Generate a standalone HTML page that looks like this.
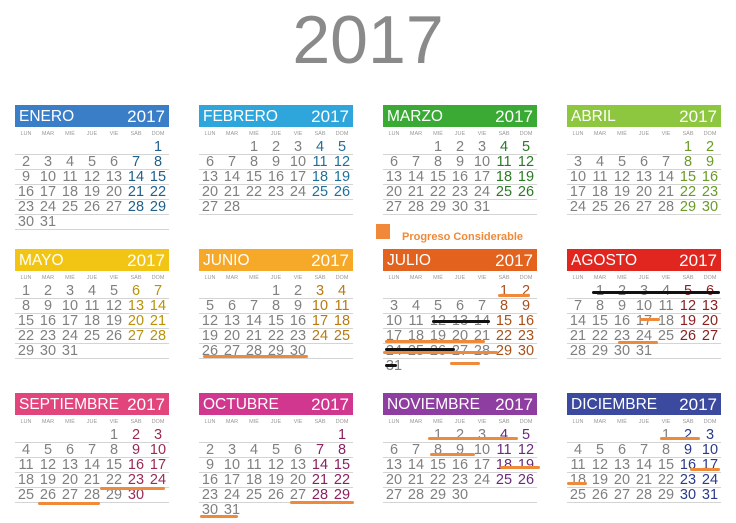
<!DOCTYPE html><html><head><meta charset="utf-8"><style>
body{margin:0;width:736px;height:523px;background:#fff;position:relative;overflow:hidden;font-family:"Liberation Sans",sans-serif}
.t{position:absolute;left:0;width:736px;top:2px;text-align:center;font-size:68px;color:#8a8a8a;line-height:76px}
.m{position:absolute;width:154px}
.h{height:22px;color:#fff;font-size:15.5px;line-height:23px;display:flex;justify-content:space-between;padding:0 4px}
.h b{font-weight:normal;font-size:17px}
.l{display:flex;height:12px;font-size:5.5px;color:#999;line-height:12px;margin-top:1px}
.l i,.r i{font-style:normal;width:22px;text-align:center}
.r{display:flex;height:14px;border-bottom:1px solid #d4d4d4;font-size:14.5px;line-height:15px;color:#808080}
.r i:nth-child(6),.r i:nth-child(7){color:var(--c)}
.o{position:absolute;height:3px;background:#ee8a3a;border-radius:2px}
.k{position:absolute;height:3px;background:#111;border-radius:2px}
</style></head><body>
<div class="t">2017</div>

<div class="m" style="left:15px;top:105px;--c:#1f5f8a"><div class="h" style="background:#3a7ec8">ENERO<b>2017</b></div><div class="l"><i>LUN</i><i>MAR</i><i>MIÉ</i><i>JUE</i><i>VIE</i><i>SÁB</i><i>DOM</i></div>
<div class="r"><i></i><i></i><i></i><i></i><i></i><i></i><i>1</i></div><div class="r"><i>2</i><i>3</i><i>4</i><i>5</i><i>6</i><i>7</i><i>8</i></div><div class="r"><i>9</i><i>10</i><i>11</i><i>12</i><i>13</i><i>14</i><i>15</i></div><div class="r"><i>16</i><i>17</i><i>18</i><i>19</i><i>20</i><i>21</i><i>22</i></div><div class="r"><i>23</i><i>24</i><i>25</i><i>26</i><i>27</i><i>28</i><i>29</i></div><div class="r"><i>30</i><i>31</i><i></i><i></i><i></i><i></i><i></i></div></div>

<div class="m" style="left:199px;top:105px;--c:#1f6f9a"><div class="h" style="background:#2ea6dc">FEBRERO<b>2017</b></div><div class="l"><i>LUN</i><i>MAR</i><i>MIÉ</i><i>JUE</i><i>VIE</i><i>SÁB</i><i>DOM</i></div>
<div class="r"><i></i><i></i><i>1</i><i>2</i><i>3</i><i>4</i><i>5</i></div><div class="r"><i>6</i><i>7</i><i>8</i><i>9</i><i>10</i><i>11</i><i>12</i></div><div class="r"><i>13</i><i>14</i><i>15</i><i>16</i><i>17</i><i>18</i><i>19</i></div><div class="r"><i>20</i><i>21</i><i>22</i><i>23</i><i>24</i><i>25</i><i>26</i></div><div class="r"><i>27</i><i>28</i><i></i><i></i><i></i><i></i><i></i></div></div>

<div class="m" style="left:383px;top:105px;--c:#2a7a25"><div class="h" style="background:#3aaa35">MARZO<b>2017</b></div><div class="l"><i>LUN</i><i>MAR</i><i>MIÉ</i><i>JUE</i><i>VIE</i><i>SÁB</i><i>DOM</i></div>
<div class="r"><i></i><i></i><i>1</i><i>2</i><i>3</i><i>4</i><i>5</i></div><div class="r"><i>6</i><i>7</i><i>8</i><i>9</i><i>10</i><i>11</i><i>12</i></div><div class="r"><i>13</i><i>14</i><i>15</i><i>16</i><i>17</i><i>18</i><i>19</i></div><div class="r"><i>20</i><i>21</i><i>22</i><i>23</i><i>24</i><i>25</i><i>26</i></div><div class="r"><i>27</i><i>28</i><i>29</i><i>30</i><i>31</i><i></i><i></i></div></div>

<div class="m" style="left:567px;top:105px;--c:#6a9a28"><div class="h" style="background:#8dc63f">ABRIL<b>2017</b></div><div class="l"><i>LUN</i><i>MAR</i><i>MIÉ</i><i>JUE</i><i>VIE</i><i>SÁB</i><i>DOM</i></div>
<div class="r"><i></i><i></i><i></i><i></i><i></i><i>1</i><i>2</i></div><div class="r"><i>3</i><i>4</i><i>5</i><i>6</i><i>7</i><i>8</i><i>9</i></div><div class="r"><i>10</i><i>11</i><i>12</i><i>13</i><i>14</i><i>15</i><i>16</i></div><div class="r"><i>17</i><i>18</i><i>19</i><i>20</i><i>21</i><i>22</i><i>23</i></div><div class="r"><i>24</i><i>25</i><i>26</i><i>27</i><i>28</i><i>29</i><i>30</i></div></div>

<div style="position:absolute;left:376px;top:224px;width:14px;height:15px;background:#f08a3a"></div>
<div style="position:absolute;left:402px;top:231px;font-size:11px;font-weight:bold;color:#ee8a3a">Progreso Considerable</div>

<div class="m" style="left:15px;top:249px;--c:#b8920a"><div class="h" style="background:#f2c514">MAYO<b>2017</b></div><div class="l"><i>LUN</i><i>MAR</i><i>MIÉ</i><i>JUE</i><i>VIE</i><i>SÁB</i><i>DOM</i></div>
<div class="r"><i>1</i><i>2</i><i>3</i><i>4</i><i>5</i><i>6</i><i>7</i></div><div class="r"><i>8</i><i>9</i><i>10</i><i>11</i><i>12</i><i>13</i><i>14</i></div><div class="r"><i>15</i><i>16</i><i>17</i><i>18</i><i>19</i><i>20</i><i>21</i></div><div class="r"><i>22</i><i>23</i><i>24</i><i>25</i><i>26</i><i>27</i><i>28</i></div><div class="r"><i>29</i><i>30</i><i>31</i><i></i><i></i><i></i><i></i></div></div>

<div class="m" style="left:199px;top:249px;--c:#b87a10"><div class="h" style="background:#f6a828">JUNIO<b>2017</b></div><div class="l"><i>LUN</i><i>MAR</i><i>MIÉ</i><i>JUE</i><i>VIE</i><i>SÁB</i><i>DOM</i></div>
<div class="r"><i></i><i></i><i></i><i>1</i><i>2</i><i>3</i><i>4</i></div><div class="r"><i>5</i><i>6</i><i>7</i><i>8</i><i>9</i><i>10</i><i>11</i></div><div class="r"><i>12</i><i>13</i><i>14</i><i>15</i><i>16</i><i>17</i><i>18</i></div><div class="r"><i>19</i><i>20</i><i>21</i><i>22</i><i>23</i><i>24</i><i>25</i></div><div class="r"><i>26</i><i>27</i><i>28</i><i>29</i><i>30</i><i></i><i></i></div></div>

<div class="m" style="left:383px;top:249px;--c:#a8501a"><div class="h" style="background:#e2621e">JULIO<b>2017</b></div><div class="l"><i>LUN</i><i>MAR</i><i>MIÉ</i><i>JUE</i><i>VIE</i><i>SÁB</i><i>DOM</i></div>
<div class="r"><i></i><i></i><i></i><i></i><i></i><i>1</i><i>2</i></div><div class="r"><i>3</i><i>4</i><i>5</i><i>6</i><i>7</i><i>8</i><i>9</i></div><div class="r"><i>10</i><i>11</i><i>12</i><i>13</i><i>14</i><i>15</i><i>16</i></div><div class="r"><i>17</i><i>18</i><i>19</i><i>20</i><i>21</i><i>22</i><i>23</i></div><div class="r"><i>24</i><i>25</i><i>26</i><i>27</i><i>28</i><i>29</i><i>30</i></div><div class="r" style="border:0"><i>31</i><i></i><i></i><i></i><i></i><i></i><i></i></div></div>

<div class="m" style="left:567px;top:249px;--c:#8a2020"><div class="h" style="background:#e0261e">AGOSTO<b>2017</b></div><div class="l"><i>LUN</i><i>MAR</i><i>MIÉ</i><i>JUE</i><i>VIE</i><i>SÁB</i><i>DOM</i></div>
<div class="r"><i></i><i>1</i><i>2</i><i>3</i><i>4</i><i>5</i><i>6</i></div><div class="r"><i>7</i><i>8</i><i>9</i><i>10</i><i>11</i><i>12</i><i>13</i></div><div class="r"><i>14</i><i>15</i><i>16</i><i>17</i><i>18</i><i>19</i><i>20</i></div><div class="r"><i>21</i><i>22</i><i>23</i><i>24</i><i>25</i><i>26</i><i>27</i></div><div class="r"><i>28</i><i>29</i><i>30</i><i>31</i><i></i><i></i><i></i></div></div>

<div class="m" style="left:15px;top:393px;--c:#9a2a55"><div class="h" style="background:#e2457c">SEPTIEMBRE<b>2017</b></div><div class="l"><i>LUN</i><i>MAR</i><i>MIÉ</i><i>JUE</i><i>VIE</i><i>SÁB</i><i>DOM</i></div>
<div class="r"><i></i><i></i><i></i><i></i><i>1</i><i>2</i><i>3</i></div><div class="r"><i>4</i><i>5</i><i>6</i><i>7</i><i>8</i><i>9</i><i>10</i></div><div class="r"><i>11</i><i>12</i><i>13</i><i>14</i><i>15</i><i>16</i><i>17</i></div><div class="r"><i>18</i><i>19</i><i>20</i><i>21</i><i>22</i><i>23</i><i>24</i></div><div class="r"><i>25</i><i>26</i><i>27</i><i>28</i><i>29</i><i>30</i><i></i></div></div>

<div class="m" style="left:199px;top:393px;--c:#8a2060"><div class="h" style="background:#d2378f">OCTUBRE<b>2017</b></div><div class="l"><i>LUN</i><i>MAR</i><i>MIÉ</i><i>JUE</i><i>VIE</i><i>SÁB</i><i>DOM</i></div>
<div class="r"><i></i><i></i><i></i><i></i><i></i><i></i><i>1</i></div><div class="r"><i>2</i><i>3</i><i>4</i><i>5</i><i>6</i><i>7</i><i>8</i></div><div class="r"><i>9</i><i>10</i><i>11</i><i>12</i><i>13</i><i>14</i><i>15</i></div><div class="r"><i>16</i><i>17</i><i>18</i><i>19</i><i>20</i><i>21</i><i>22</i></div><div class="r"><i>23</i><i>24</i><i>25</i><i>26</i><i>27</i><i>28</i><i>29</i></div><div class="r" style="border:0"><i>30</i><i>31</i><i></i><i></i><i></i><i></i><i></i></div></div>

<div class="m" style="left:383px;top:393px;--c:#6a2a7a"><div class="h" style="background:#8e3ea0">NOVIEMBRE<b>2017</b></div><div class="l"><i>LUN</i><i>MAR</i><i>MIÉ</i><i>JUE</i><i>VIE</i><i>SÁB</i><i>DOM</i></div>
<div class="r"><i></i><i></i><i>1</i><i>2</i><i>3</i><i>4</i><i>5</i></div><div class="r"><i>6</i><i>7</i><i>8</i><i>9</i><i>10</i><i>11</i><i>12</i></div><div class="r"><i>13</i><i>14</i><i>15</i><i>16</i><i>17</i><i>18</i><i>19</i></div><div class="r"><i>20</i><i>21</i><i>22</i><i>23</i><i>24</i><i>25</i><i>26</i></div><div class="r"><i>27</i><i>28</i><i>29</i><i>30</i><i></i><i></i><i></i></div></div>

<div class="m" style="left:567px;top:393px;--c:#2a3a8a"><div class="h" style="background:#3b4a9e">DICIEMBRE<b>2017</b></div><div class="l"><i>LUN</i><i>MAR</i><i>MIÉ</i><i>JUE</i><i>VIE</i><i>SÁB</i><i>DOM</i></div>
<div class="r"><i></i><i></i><i></i><i></i><i>1</i><i>2</i><i>3</i></div><div class="r"><i>4</i><i>5</i><i>6</i><i>7</i><i>8</i><i>9</i><i>10</i></div><div class="r"><i>11</i><i>12</i><i>13</i><i>14</i><i>15</i><i>16</i><i>17</i></div><div class="r"><i>18</i><i>19</i><i>20</i><i>21</i><i>22</i><i>23</i><i>24</i></div><div class="r"><i>25</i><i>26</i><i>27</i><i>28</i><i>29</i><i>30</i><i>31</i></div></div>

<div class="o" style="left:203px;top:355px;width:105px"></div>
<div class="o" style="left:498px;top:294px;width:32px"></div>
<div class="k" style="left:432px;top:320px;width:58px"></div>
<div class="o" style="left:385px;top:340px;width:100px"></div>
<div class="o" style="left:383px;top:351px;width:115px"></div>
<div class="k" style="left:385px;top:348px;width:70px"></div>
<div class="o" style="left:450px;top:362px;width:30px"></div>
<div class="k" style="left:385px;top:364px;width:12px"></div>
<div class="k" style="left:592px;top:291px;width:128px"></div>
<div class="o" style="left:640px;top:318px;width:20px"></div>
<div class="o" style="left:618px;top:341px;width:40px"></div>
<div class="o" style="left:100px;top:487px;width:65px"></div>
<div class="o" style="left:38px;top:502px;width:62px"></div>
<div class="o" style="left:290px;top:501px;width:64px"></div>
<div class="o" style="left:200px;top:515px;width:38px"></div>
<div class="o" style="left:428px;top:437px;width:90px"></div>
<div class="o" style="left:430px;top:453px;width:45px"></div>
<div class="o" style="left:500px;top:466px;width:40px"></div>
<div class="o" style="left:660px;top:437px;width:40px"></div>
<div class="o" style="left:690px;top:468px;width:30px"></div>
<div class="o" style="left:567px;top:482px;width:20px"></div>
</body></html>
